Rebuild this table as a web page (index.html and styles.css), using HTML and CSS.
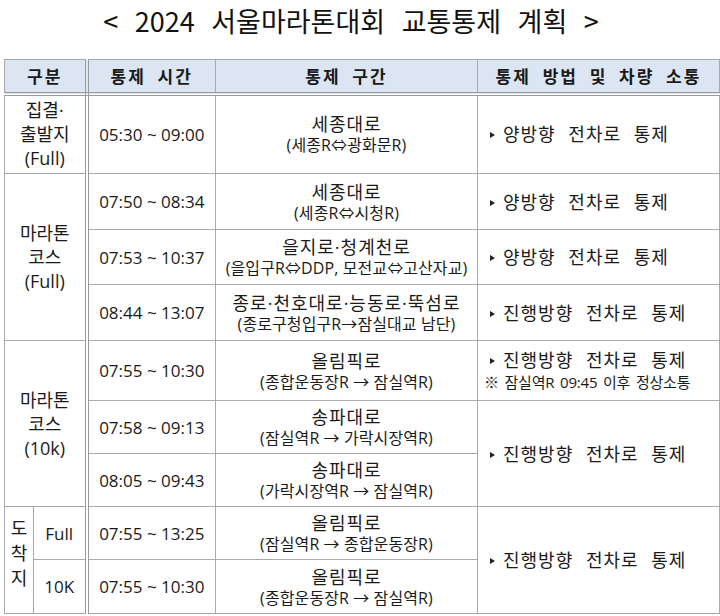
FILE: index.html
```html
<!DOCTYPE html>
<html lang="ko">
<head>
<meta charset="utf-8">
<title>2024 서울마라톤대회 교통통제 계획</title>
<link rel="stylesheet" href="styles.css">
</head>
<body>
<div class="page">
  <h1 class="title">&lt; 2024 서울마라톤대회 교통통제 계획 &gt;</h1>
  <table class="plan">
    <colgroup>
      <col class="c1a"><col class="c1b"><col class="c2"><col class="c3"><col class="c4">
    </colgroup>
    <thead>
      <tr class="head">
        <th colspan="2" class="dbl">구분</th>
        <th>통제 시간</th>
        <th>통제 구간</th>
        <th>통제 방법 및 차량 소통</th>
      </tr>
    </thead>
    <tbody>
      <tr class="h80">
        <td colspan="2" class="cat dbl">집결·<br>출발지<br>(Full)</td>
        <td class="time">05:30 ~ 09:00</td>
        <td class="sec"><div class="road">세종대로</div><div class="sub">(세종R⇔광화문R)</div></td>
        <td class="method"><span class="tri"></span>양방향 전차로 통제</td>
      </tr>
      <tr class="h56">
        <td colspan="2" rowspan="3" class="cat dbl">마라톤<br>코스<br>(Full)</td>
        <td class="time">07:50 ~ 08:34</td>
        <td class="sec"><div class="road">세종대로</div><div class="sub">(세종R⇔시청R)</div></td>
        <td class="method"><span class="tri"></span>양방향 전차로 통제</td>
      </tr>
      <tr class="h55">
        <td class="time">07:53 ~ 10:37</td>
        <td class="sec"><div class="road">을지로·청계천로</div><div class="sub">(을입구R⇔DDP, 모전교⇔고산자교)</div></td>
        <td class="method"><span class="tri"></span>양방향 전차로 통제</td>
      </tr>
      <tr class="h56">
        <td class="time">08:44 ~ 13:07</td>
        <td class="sec"><div class="road">종로·천호대로·능동로·뚝섬로</div><div class="sub">(종로구청입구R→잠실대교 남단)</div></td>
        <td class="method"><span class="tri"></span>진행방향 전차로 통제</td>
      </tr>
      <tr class="h60">
        <td colspan="2" rowspan="3" class="cat dbl">마라톤<br>코스<br>(10k)</td>
        <td class="time">07:55 ~ 10:30</td>
        <td class="sec"><div class="road">올림픽로</div><div class="sub">(종합운동장R → 잠실역R)</div></td>
        <td class="method"><div><span class="tri"></span>진행방향 전차로 통제</div><div class="note">※ 잠실역R 09:45 이후 정상소통</div></td>
      </tr>
      <tr class="h53">
        <td class="time">07:58 ~ 09:13</td>
        <td class="sec"><div class="road">송파대로</div><div class="sub">(잠실역R → 가락시장역R)</div></td>
        <td rowspan="2" class="method"><span class="tri"></span>진행방향 전차로 통제</td>
      </tr>
      <tr class="h53">
        <td class="time">08:05 ~ 09:43</td>
        <td class="sec"><div class="road">송파대로</div><div class="sub">(가락시장역R → 잠실역R)</div></td>
      </tr>
      <tr class="h53">
        <td rowspan="2" class="vert">도<br>착<br>지</td>
        <td class="kind dbl">Full</td>
        <td class="time">07:55 ~ 13:25</td>
        <td class="sec"><div class="road">올림픽로</div><div class="sub">(잠실역R → 종합운동장R)</div></td>
        <td rowspan="2" class="method"><span class="tri"></span>진행방향 전차로 통제</td>
      </tr>
      <tr class="h54">
        <td class="kind dbl">10K</td>
        <td class="time">07:55 ~ 10:30</td>
        <td class="sec"><div class="road">올림픽로</div><div class="sub">(종합운동장R → 잠실역R)</div></td>
      </tr>
    </tbody>
  </table>
</div>
</body>
</html>
```
FILE: styles.css
```css
html, body {
  margin: 0;
  padding: 0;
  background: #ffffff;
}

body {
  font-family: "Open Sans", "Noto Sans CJK KR", sans-serif;
  color: #1a1a1a;
}

.page {
  padding: 0 2px 0 4px;
}

.title {
  margin: 0;
  height: 59px;
  line-height: 41px;
  padding-right: 20px;
  text-align: center;
  font-family: "Noto Sans CJK KR", sans-serif;
  font-size: 27px;
  font-weight: 400;
  word-spacing: 9px;
  color: #111;
}

.plan {
  border-collapse: collapse;
  table-layout: fixed;
  width: 715px;
}

.c1a { width: 29px; }
.c1b { width: 53px; }
.c2 { width: 129px; }
.c3 { width: 262px; }
.c4 { width: 242px; }

.plan th,
.plan td {
  border: 1px solid #a9a9a9;
  padding: 0;
  text-align: center;
  vertical-align: middle;
}

.head { height: 34px; }

.plan th {
  background: #dce6f2;
  font-family: "Noto Sans CJK KR", sans-serif;
  font-size: 17px;
  font-weight: 700;
  letter-spacing: 2px;
  word-spacing: 5px;
  color: #1a1a1a;
  border-bottom: 4px double #9a9a9a;
}

.plan .dbl {
  border-right: 4px double #9a9a9a;
}

.h80 { height: 80px; }
.h60 { height: 60px; }
.h56 { height: 56px; }
.h55 { height: 55px; }
.h54 { height: 54px; }
.h53 { height: 53px; }

.cat {
  font-size: 18px;
  line-height: 24px;
}

.vert {
  font-size: 18px;
  line-height: 25px;
  padding-bottom: 14px !important;
}

.kind {
  font-size: 17px;
}

.time {
  font-size: 17px;
}

.road {
  font-size: 18px;
  line-height: 22px;
  letter-spacing: 1px;
}

.sub {
  font-size: 16px;
  line-height: 20px;
  letter-spacing: 0.1px;
}

.plan .method {
  text-align: left;
  padding-left: 12px;
  font-size: 18px;
  letter-spacing: 1px;
  word-spacing: 7px;
  line-height: 22px;
}

.tri {
  display: inline-block;
  width: 0;
  height: 0;
  border-left: 5px solid #222;
  border-top: 3.5px solid transparent;
  border-bottom: 3.5px solid transparent;
  margin-right: 8px;
  vertical-align: 3px;
}

.note {
  font-size: 15px;
  letter-spacing: -0.2px;
  word-spacing: 2px;
  margin-left: -6px;
}
```
